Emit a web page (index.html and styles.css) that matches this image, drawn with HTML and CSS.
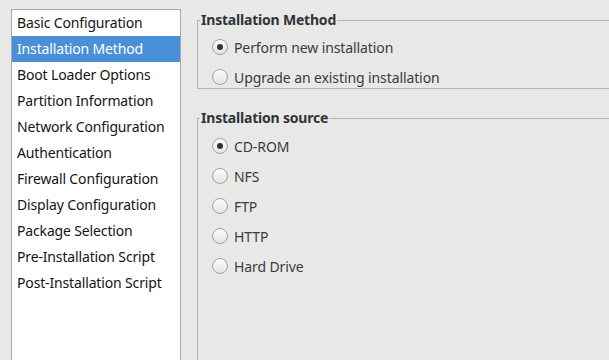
FILE: index.html
```html
<!DOCTYPE html>
<html>
<head>
    <link rel="stylesheet" href="styles.css">
</head>
<body>
    <div class="window">
        <ul class="sections">
            <li class="section">Basic Configuration</li>
            <li class="section selected">Installation Method</li>
            <li class="section">Boot Loader Options</li>
            <li class="section">Partition Information</li>
            <li class="section">Network Configuration</li>
            <li class="section">Authentication</li>
            <li class="section">Firewall Configuration</li>
            <li class="section">Display Configuration</li>
            <li class="section">Package Selection</li>
            <li class="section">Pre-Installation Script</li>
            <li class="section">Post-Installation Script</li>
        </ul>

        <div class="panel">
            <fieldset class="frame frame-method">
                <legend class="frame-title">Installation Method</legend>
                <label class="option"><span class="radio checked"></span>Perform new installation</label>
                <label class="option"><span class="radio"></span>Upgrade an existing installation</label>
            </fieldset>

            <fieldset class="frame frame-source">
                <legend class="frame-title">Installation source</legend>
                <label class="option"><span class="radio checked"></span>CD-ROM</label>
                <label class="option"><span class="radio"></span>NFS</label>
                <label class="option"><span class="radio"></span>FTP</label>
                <label class="option"><span class="radio"></span>HTTP</label>
                <label class="option"><span class="radio"></span>Hard Drive</label>
            </fieldset>
        </div>
    </div>
</body>
</html>
```

FILE: styles.css
```css
/* General */
html, body {
    margin: 0;
    padding: 0;
    height: 100%;
    overflow: hidden;
}

body {
    background-color: #e8e8e7;
    font-family: "Noto Sans", sans-serif;
    font-size: 14px;
    color: #2e3436;
}

.window {
    display: flex;
    height: 100%;
    padding: 9px 0 0 11px;
    box-sizing: border-box;
}

/* Section list on the left */
.sections {
    list-style: none;
    margin: 0;
    padding: 0;
    width: 168px;
    flex-shrink: 0;
    background-color: #ffffff;
    border: 1px solid #a8a8a6;
    border-bottom: none;
}

.section {
    height: 26px;
    line-height: 26px;
    padding-left: 5px;
    color: #151515;
    letter-spacing: -0.15px;
    white-space: nowrap;
}

.section.selected {
    background-color: #4a90d9;
    color: #ffffff;
}

/* Right panel */
.panel {
    display: flex;
    flex-direction: column;
    gap: 20px;
    margin-left: 16px;
    flex: 1;
    margin-right: -30px;
}

.frame {
    margin: 0;
    padding: 0;
    border: 1px solid #b3b3b1;
    display: flex;
    flex-direction: column;
    gap: 8px;
    min-width: 0;
}

.frame-method {
    margin-top: 2px;
    padding-top: 7px;
    padding-bottom: 0;
}

.frame-source {
    flex: 1;
    padding-top: 8px;
    border-bottom: none;
}

.frame-title {
    padding: 0 1px;
    margin-left: 2px;
    font-weight: bold;
    line-height: 18px;
    color: #2e3436;
    letter-spacing: -0.2px;
}

/* Radio options */
.option {
    display: flex;
    align-items: center;
    height: 22px;
    gap: 6px;
    margin-left: 14px;
    color: #383c3d;
    letter-spacing: -0.1px;
    white-space: nowrap;
}

.radio {
    width: 14px;
    height: 14px;
    border: 1px solid #a3a3a1;
    border-radius: 50%;
    background: linear-gradient(#fcfcfc, #e3e3e2);
    display: flex;
    align-items: center;
    justify-content: center;
    flex-shrink: 0;
}

.radio.checked::after {
    content: "";
    width: 6px;
    height: 6px;
    border-radius: 50%;
    background-color: #2e3436;
}
```
